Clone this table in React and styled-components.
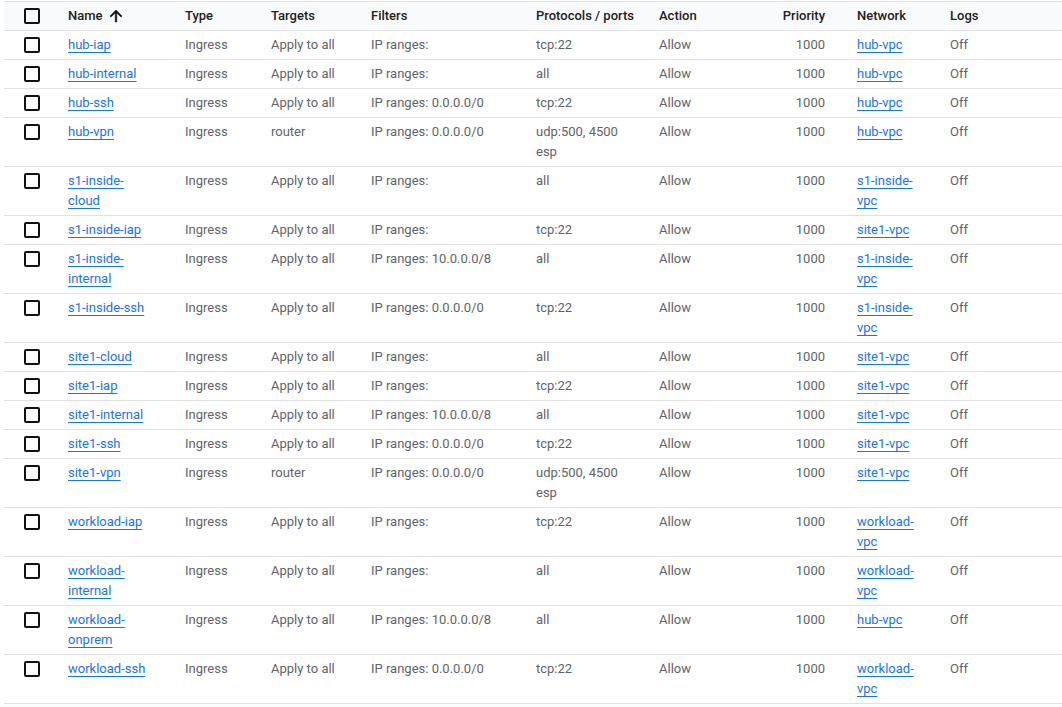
import React from "react";
import styled, { createGlobalStyle } from "styled-components";

const Global = createGlobalStyle`
  html, body { margin: 0; padding: 0; background: #fff; }
  body { font-family: Roboto, "Noto Sans", Arial, sans-serif; }
`;

const Page = styled.div`
  padding: 1px 0 0 4px;
`;

const Table = styled.table`
  width: 1058px;
  border-collapse: collapse;
  table-layout: fixed;
  font-size: 13px;
  line-height: 20px;
  color: #5f6368;
`;

const HeadRow = styled.tr`
  background: #f8f9fa;
  border-top: 1px solid #e0e0e0;
  border-bottom: 1px solid #e0e0e0;
`;

const Th = styled.th`
  text-align: ${(p) => (p.$right ? "right" : "left")};
  font-weight: 500;
  color: #202124;
  padding: 4px ${(p) => p.$pr || 0}px 4px ${(p) => p.$pl || 0}px;
  vertical-align: top;
  white-space: nowrap;
`;

const Row = styled.tr`
  border-bottom: 1px solid #e0e0e0;
`;

const Td = styled.td`
  text-align: ${(p) => (p.$right ? "right" : "left")};
  padding: 4px ${(p) => p.$pr || 0}px 4px ${(p) => p.$pl || 0}px;
  vertical-align: top;
  overflow-wrap: normal;
`;

const Box = styled.span`
  display: block;
  width: 16px;
  height: 16px;
  box-sizing: border-box;
  border: 2px solid #111;
  border-radius: 2px;
  margin-top: 2px;
`;

const Link = styled.a`
  color: #1a73e8;
  text-decoration: underline;
  text-decoration-thickness: 1px;
  text-underline-offset: 3px;
  cursor: pointer;
`;

const SortHead = styled.span`
  display: inline-flex;
  align-items: center;
  gap: 4px;
`;

const ArrowUp = () => (
  <svg width="18" height="18" viewBox="0 0 24 24" style={{ display: "block" }}>
    <path
      fill="#111"
      stroke="#111"
      strokeWidth="0.8"
      d="M4 12l1.41 1.41L11 7.83V20h2V7.83l5.58 5.59L20 12l-8-8-8 8z"
    />
  </svg>
);

const rules = [
  ["hub-iap", "Apply to all", "IP ranges:", "tcp:22", "hub-vpc"],
  ["hub-internal", "Apply to all", "IP ranges:", "all", "hub-vpc"],
  ["hub-ssh", "Apply to all", "IP ranges: 0.0.0.0/0", "tcp:22", "hub-vpc"],
  ["hub-vpn", "router", "IP ranges: 0.0.0.0/0", "udp:500, 4500 esp", "hub-vpc"],
  ["s1-inside-cloud", "Apply to all", "IP ranges:", "all", "s1-inside-vpc"],
  ["s1-inside-iap", "Apply to all", "IP ranges:", "tcp:22", "site1-vpc"],
  ["s1-inside-internal", "Apply to all", "IP ranges: 10.0.0.0/8", "all", "s1-inside-vpc"],
  ["s1-inside-ssh", "Apply to all", "IP ranges: 0.0.0.0/0", "tcp:22", "s1-inside-vpc"],
  ["site1-cloud", "Apply to all", "IP ranges:", "all", "site1-vpc"],
  ["site1-iap", "Apply to all", "IP ranges:", "tcp:22", "site1-vpc"],
  ["site1-internal", "Apply to all", "IP ranges: 10.0.0.0/8", "all", "site1-vpc"],
  ["site1-ssh", "Apply to all", "IP ranges: 0.0.0.0/0", "tcp:22", "site1-vpc"],
  ["site1-vpn", "router", "IP ranges: 0.0.0.0/0", "udp:500, 4500 esp", "site1-vpc"],
  ["workload-iap", "Apply to all", "IP ranges:", "tcp:22", "workload-vpc"],
  ["workload-internal", "Apply to all", "IP ranges:", "all", "workload-vpc"],
  ["workload-onprem", "Apply to all", "IP ranges: 10.0.0.0/8", "all", "hub-vpc"],
  ["workload-ssh", "Apply to all", "IP ranges: 0.0.0.0/0", "tcp:22", "workload-vpc"],
];

const cols = [64, 117, 86, 100, 165, 123, 86, 112, 93, 112];

export default function App() {
  return (
    <>
      <Global />
      <Page>
        <Table>
          <colgroup>
            {cols.map((w, i) => (
              <col key={i} style={{ width: w }} />
            ))}
          </colgroup>
          <thead>
            <HeadRow>
              <Th $pl={20}>
                <Box />
              </Th>
              <Th>
                <SortHead>
                  Name <ArrowUp />
                </SortHead>
              </Th>
              <Th>Type</Th>
              <Th>Targets</Th>
              <Th>Filters</Th>
              <Th>Protocols / ports</Th>
              <Th>Action</Th>
              <Th $right $pr={32}>Priority</Th>
              <Th>Network</Th>
              <Th>Logs</Th>
            </HeadRow>
          </thead>
          <tbody>
            {rules.map(([name, target, filter, proto, net]) => (
              <Row key={name}>
                <Td $pl={20}>
                  <Box />
                </Td>
                <Td $pr={33}>
                  <Link>{name}</Link>
                </Td>
                <Td>Ingress</Td>
                <Td>{target}</Td>
                <Td>{filter}</Td>
                <Td $pr={31}>{proto}</Td>
                <Td>Allow</Td>
                <Td $right $pr={32}>1000</Td>
                <Td $pr={31}>
                  <Link>{net}</Link>
                </Td>
                <Td>Off</Td>
              </Row>
            ))}
          </tbody>
        </Table>
      </Page>
    </>
  );
}
